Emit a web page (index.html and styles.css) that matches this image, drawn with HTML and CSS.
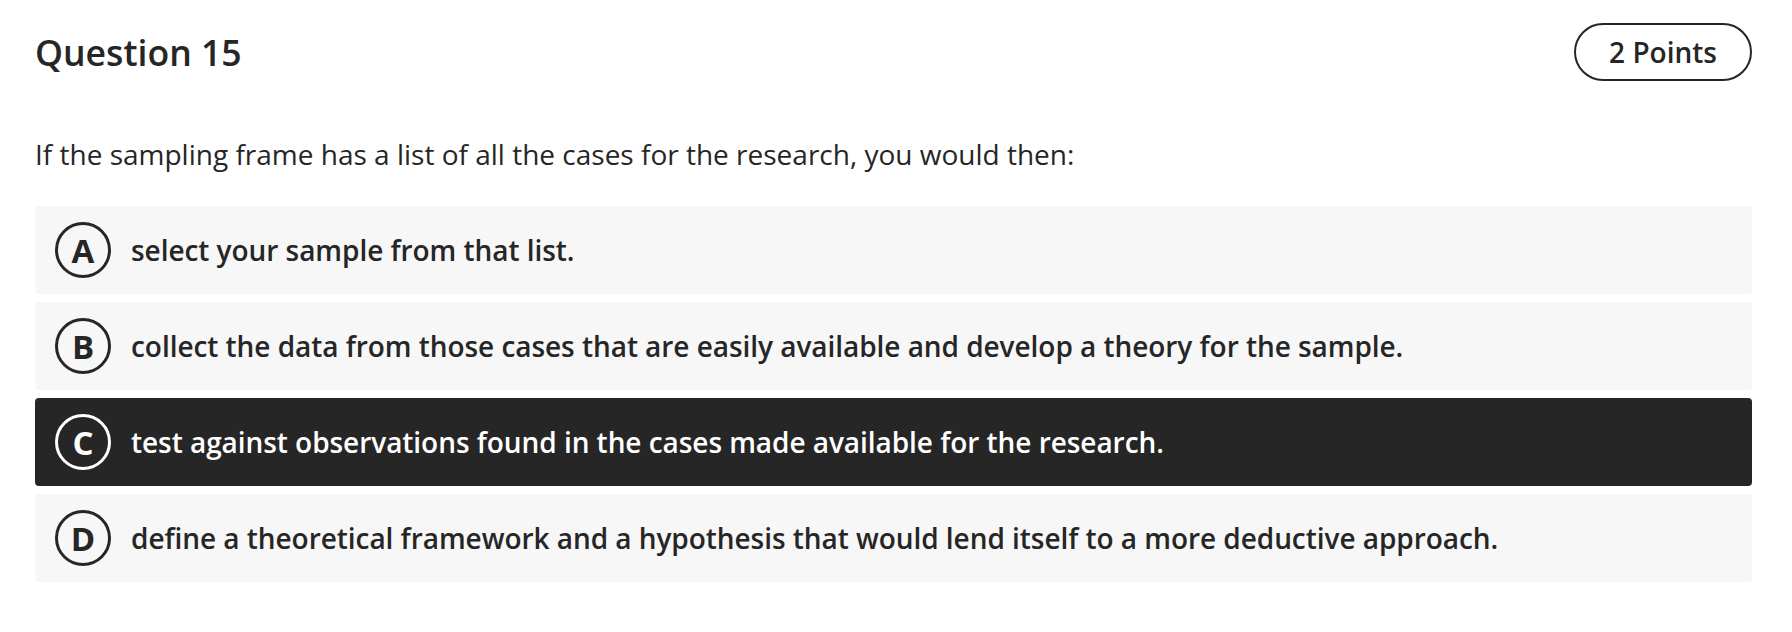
FILE: index.html
```html
<!DOCTYPE HTML>
<html lang="en-US">
<head>
	<meta charset="UTF-8">
	<title>Question 15</title>
    <link rel="stylesheet" href="styles.css">
</head>
<body>
<div id="container">
    <div class="q-head">
        <h1>Question 15</h1>
        <span class="points">2 Points</span>
    </div>
    <p class="q-text">If the sampling frame has a list of all the cases for the research, you would then:</p>
    <ul class="answers">
        <li class="answer">
            <span class="letter">A</span>
            <span class="label">select your sample from that list.</span>
        </li>
        <li class="answer">
            <span class="letter">B</span>
            <span class="label">collect the data from those cases that are easily available and develop a theory for the sample.</span>
        </li>
        <li class="answer selected">
            <span class="letter">C</span>
            <span class="label">test against observations found in the cases made available for the research.</span>
        </li>
        <li class="answer">
            <span class="letter">D</span>
            <span class="label">define a theoretical framework and a hypothesis that would lend itself to a more deductive approach.</span>
        </li>
    </ul>
</div>
</body>
</html>
```

FILE: styles.css
```css
/* Reset */
body,div,span,h1,p,ul,li {
    margin: 0;
    padding: 0;
}
body {
    font: 28px "Open Sans", "Liberation Sans", sans-serif;
    color: #262626;
    background: #fff;
}

/* Question */
#container {
    padding: 23px 40px 0 35px;
}
.q-head {
    display: flex;
    align-items: center;
    justify-content: space-between;
}
.q-head h1 {
    font-size: 35.6px;
    font-weight: 600;
    line-height: 48px;
}
.points {
    display: inline-block;
    height: 54px;
    line-height: 54px;
    padding: 0 33px;
    border: 2px solid #262626;
    border-radius: 30px;
    font-weight: 600;
}
.q-text {
    margin-top: 54px;
    line-height: 38px;
}

/* Answers */
.answers {
    list-style: none;
    margin-top: 33px;
}
.answer {
    display: flex;
    align-items: center;
    height: 88px;
    padding: 0 20px;
    margin-bottom: 8px;
    background: #f7f7f7;
    border-radius: 4px;
}
.answer .letter {
    display: flex;
    align-items: center;
    justify-content: center;
    flex: none;
    width: 50px;
    height: 50px;
    border: 3px solid #262626;
    border-radius: 50%;
    font-size: 33px;
    font-weight: 700;
    line-height: 1;
}
.answer .label {
    margin-left: 20px;
    font-weight: 600;
    letter-spacing: -0.05px;
}
.answer.selected {
    color: #fff;
    background: #262626;
}
.answer.selected .letter {
    border-color: #fff;
}
```
